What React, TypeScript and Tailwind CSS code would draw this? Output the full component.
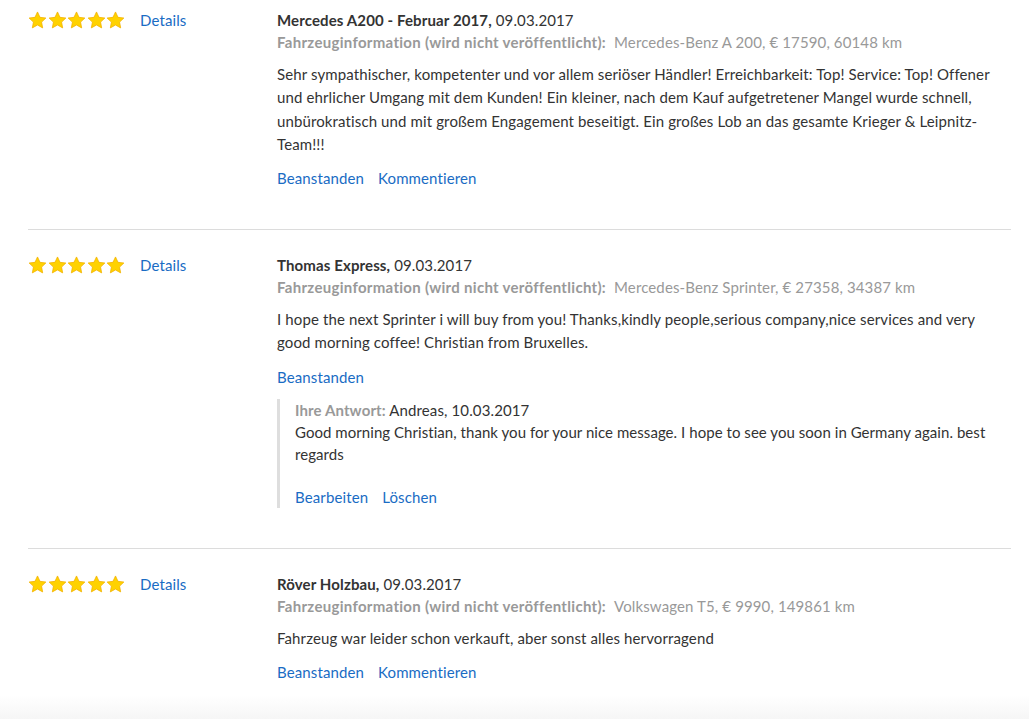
import React from 'react';

interface Review {
  id: number;
  title: string;
  date: string;
  vehicle: string;
  text: string;
  actions: string[];
  reply?: { author: string; date: string; text: string };
}

const reviews: Review[] = [
  {
    id: 1,
    title: 'Mercedes A200 - Februar 2017',
    date: '09.03.2017',
    vehicle: 'Mercedes-Benz A 200, € 17590, 60148 km',
    text: 'Sehr sympathischer, kompetenter und vor allem seriöser Händler! Erreichbarkeit: Top! Service: Top! Offener und ehrlicher Umgang mit dem Kunden! Ein kleiner, nach dem Kauf aufgetretener Mangel wurde schnell, unbürokratisch und mit großem Engagement beseitigt. Ein großes Lob an das gesamte Krieger & Leipnitz-Team!!!',
    actions: ['Beanstanden', 'Kommentieren'],
  },
  {
    id: 2,
    title: 'Thomas Express',
    date: '09.03.2017',
    vehicle: 'Mercedes-Benz Sprinter, € 27358, 34387 km',
    text: 'I hope the next Sprinter i will buy from you! Thanks,kindly people,serious company,nice services and very good morning coffee! Christian from Bruxelles.',
    actions: ['Beanstanden'],
    reply: {
      author: 'Andreas',
      date: '10.03.2017',
      text: 'Good morning Christian, thank you for your nice message. I hope to see you soon in Germany again. best regards',
    },
  },
  {
    id: 3,
    title: 'Röver Holzbau',
    date: '09.03.2017',
    vehicle: 'Volkswagen T5, € 9990, 149861 km',
    text: 'Fahrzeug war leider schon verkauft, aber sonst alles hervorragend',
    actions: ['Beanstanden', 'Kommentieren'],
  },
];

function Star() {
  return (
    <svg width="19" height="18" viewBox="0 0 24 23" className="shrink-0">
      <path
        d="M12 1.2l3.2 6.9 7.5.9-5.5 5.2 1.4 7.4L12 17.9l-6.6 3.7 1.4-7.4L1.3 9l7.5-.9z"
        fill="#ffd200"
        stroke="#f2b100"
        strokeWidth="1"
        strokeLinejoin="round"
      />
    </svg>
  );
}

function Stars() {
  return (
    <div className="flex items-center gap-[0.5px]">
      {[0, 1, 2, 3, 4].map(i => (
        <Star key={i} />
      ))}
    </div>
  );
}

function ReviewItem({ review, first, last }: { review: Review; first: boolean; last: boolean }) {
  return (
    <div className={`flex ${first ? 'pt-[9px]' : 'pt-[24px] border-t border-[#dcdcdc]'} ${last ? 'pb-[12px]' : 'pb-[40px]'}`}>
      {/* rating column */}
      <div className="w-[249px] shrink-0 flex items-start pt-[2px]">
        <Stars />
        <a className="ml-[15px] text-[#1a6cc4] leading-[18px] cursor-pointer">Details</a>
      </div>

      {/* review body */}
      <div className="flex-1 min-w-0">
        <div className="leading-[22px] text-[#333]">
          <span className="font-bold">{review.title},</span> {review.date}
        </div>
        <div className="leading-[22px] text-[#999]">
          <span className="font-bold tracking-[0.3px]">Fahrzeuginformation (wird nicht veröffentlicht):</span>
          <span className="ml-[8px]">{review.vehicle}</span>
        </div>
        <p className="mt-[10px] leading-[23.3px] text-[#333] pr-[20px]">{review.text}</p>
        <div className="mt-[11px] flex gap-[14px] leading-[22px] text-[#1a6cc4]">
          {review.actions.map(a => (
            <a key={a} className="cursor-pointer">{a}</a>
          ))}
        </div>

        {review.reply && (
          <div className="mt-[11px] border-l-[3px] border-[#dedede] pl-[15px]">
            <div className="leading-[22px] text-[#333]">
              <span className="font-bold text-[#999]">Ihre Antwort:</span> {review.reply.author}, {review.reply.date}
            </div>
            <p className="leading-[22px] text-[#333] tracking-[0.05px]">{review.reply.text}</p>
            <div className="mt-[21px] flex gap-[14px] leading-[22px] text-[#1a6cc4]">
              <a className="cursor-pointer">Bearbeiten</a>
              <a className="cursor-pointer">Löschen</a>
            </div>
          </div>
        )}
      </div>
    </div>
  );
}

export default function App() {
  return (
    <div className="min-h-[719px] bg-white text-[15px] tracking-[0.12px] font-['Lato','Liberation_Sans',sans-serif] flex flex-col">
      <div className="pl-[28px] w-[1011px]">
        {reviews.map((r, i) => (
          <ReviewItem key={r.id} review={r} first={i === 0} last={i === reviews.length - 1} />
        ))}
      </div>
      <div className="flex-1 bg-gradient-to-b from-white to-[#f6f6f6]" />
    </div>
  );
}
